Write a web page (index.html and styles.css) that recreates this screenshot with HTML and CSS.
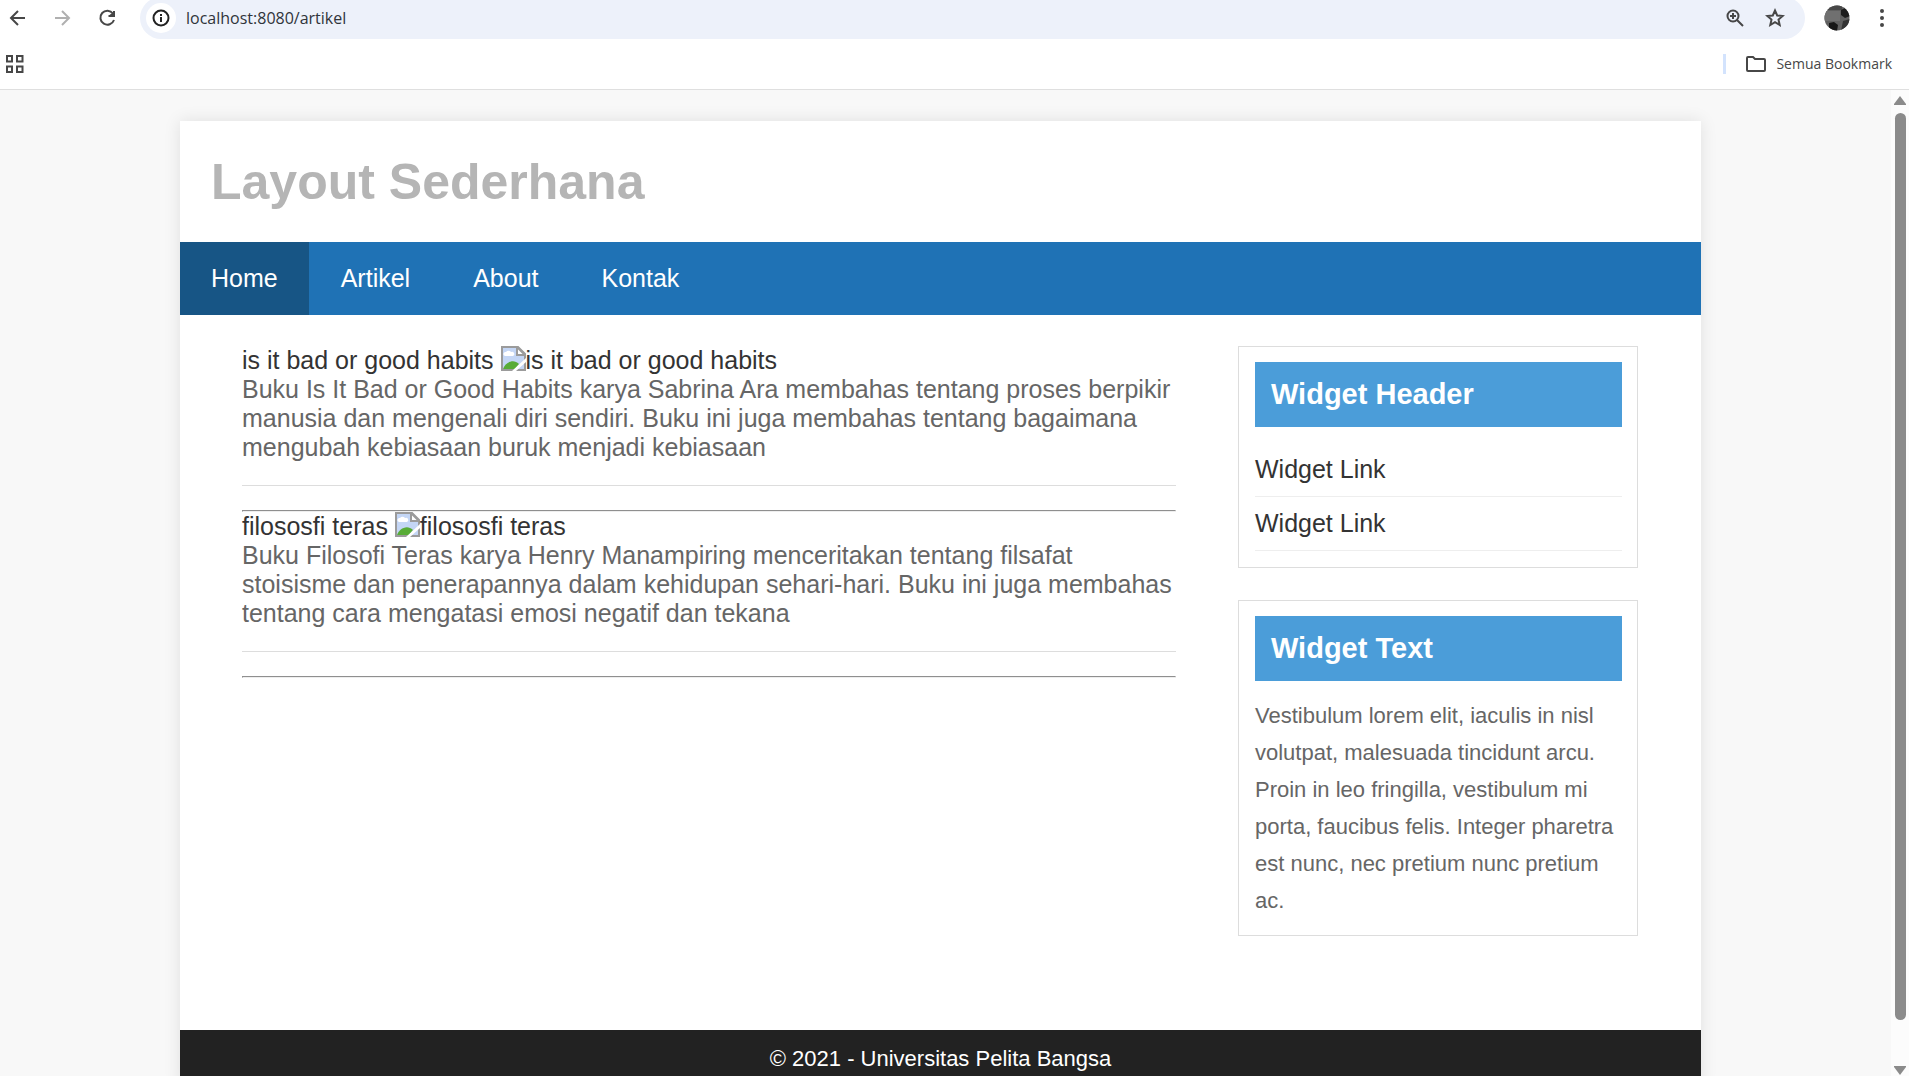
FILE: index.html
```html
<!DOCTYPE html>
<html lang="id">
<head>
<meta charset="utf-8">
<title>Layout Sederhana</title>
<link rel="stylesheet" href="styles.css">
</head>
<body>
<svg class="sprite" aria-hidden="true">
  <symbol id="broken" viewBox="0 0 25 25">
    <path d="M1 1H17L24 8V24H1Z" fill="#c4d6f5" stroke="#9b9b9b" stroke-width="2"/>
    <path d="M4 10a2 2 0 0 1 1-4 3 3 0 0 1 5 0 2 2 0 0 1 2 4Z" fill="#fff"/>
    <path d="M2 23C4 17 12 12 18 18L14 23Z" fill="#58ac37"/>
    <path d="M16 1V9H24Z" fill="#fff" stroke="#9b9b9b" stroke-width="2"/>
    <path d="M25 12V16L15 25H11Z" fill="#fff"/>
  </symbol>
</svg>

<header class="chrome">
  <div class="toolbar">
    <div class="nav-buttons">
      <button class="icon-btn" aria-label="Kembali"><svg width="20" height="20" viewBox="0 0 20 20"><path d="M17 10H3M10 3L3 10L10 17"/></svg></button>
      <button class="icon-btn faded" aria-label="Maju"><svg width="20" height="20" viewBox="0 0 20 20"><path d="M2 10H16M9 3L16 10L9 17"/></svg></button>
      <button class="icon-btn" aria-label="Muat ulang"><svg width="20" height="20" viewBox="0 0 20 20"><path d="M15 5.500A7 7 0 1 0 16 12M16 3V8H10.500M12 8L16 4.500"/></svg></button>
    </div>
    <div class="address">
      <button class="site-info" aria-label="Informasi situs"><svg width="18" height="18" viewBox="0 0 18 18"><circle cx="9" cy="9" r="7.500"/><path d="M9 8V13M9 5V7"/></svg></button>
      <input class="url" type="text" value="localhost:8080/artikel" aria-label="Alamat">
      <button class="icon-btn" aria-label="Zoom"><svg width="20" height="20" viewBox="0 0 20 20"><circle cx="8" cy="8" r="5.500"/><path d="M12 12L18 18M8 5V11M5 8H11"/></svg></button>
      <button class="icon-btn" aria-label="Tambahkan bookmark"><svg width="20" height="20" viewBox="0 0 20 20"><path d="M10 2.500L12.200 7.500L17.600 8L13.500 11.600L14.700 17L10 14.100L5.300 17L6.500 11.600L2.400 8L7.800 7.500Z"/></svg></button>
    </div>
    <button class="avatar" aria-label="Profil"><svg width="26" height="26" viewBox="0 0 26 26"><defs><clipPath id="round"><circle cx="13" cy="13" r="12.500"/></clipPath></defs><g clip-path="url(#round)"><path d="M0 0H26V26H0Z" fill="#606060"/><path d="M0 0H18V5H0Z" fill="#484848"/><path d="M0 6H16V16H0Z" fill="#707070"/><path d="M17 5L21 3L26 5V11L21 13L17 10Z" fill="#1c1c1c"/><path d="M19 16L26 14V26H17Z" fill="#333"/><path d="M5 18L10 17L14 20L13 26H5Z" fill="#171717"/></g></svg></button>
    <button class="menu-btn" aria-label="Menu"><svg width="6" height="20" viewBox="0 0 6 20"><circle cx="3" cy="3" r="2"/><circle cx="3" cy="10" r="2"/><circle cx="3" cy="17" r="2"/></svg></button>
  </div>
  <div class="bookmarks">
    <button class="icon-btn" aria-label="Aplikasi"><svg width="20" height="20" viewBox="0 0 20 20"><path d="M3 2H8V7.500H3ZM13 2H18.500V7.500H13ZM3 12.500H8V18H3ZM13 12.500H18.500V18H13Z"/></svg></button>
    <button class="all-bookmarks"><svg width="22" height="18" viewBox="0 0 22 18"><path d="M2 15V3Q2 2 3 2H8L10 4H19Q20 4 20 5V15Q20 16 19 16H3Q2 16 2 15Z"/></svg>Semua Bookmark</button>
  </div>
</header>

<div class="viewport">
  <div class="page">
    <div class="container">
      <header class="site-header"><h1>Layout Sederhana</h1></header>
      <nav class="site-nav">
        <a class="active" href="#">Home</a>
        <a href="#">Artikel</a>
        <a href="#">About</a>
        <a href="#">Kontak</a>
      </nav>
      <div class="wrapper">
        <main class="main">
          <article class="entry">
            <h2><a href="#">is it bad or good habits</a> <svg class="broken" aria-hidden="true"><use href="#broken"/></svg>is it bad or good habits</h2>
            <p>Buku Is It Bad or Good Habits karya Sabrina Ara membahas tentang proses berpikir manusia dan mengenali diri sendiri. Buku ini juga membahas tentang bagaimana mengubah kebiasaan buruk menjadi kebiasaan</p>
          </article>
          <hr class="divider">
          <article class="entry">
            <h2><a href="#">filososfi teras</a> <svg class="broken" aria-hidden="true"><use href="#broken"/></svg>filososfi teras</h2>
            <p>Buku Filosofi Teras karya Henry Manampiring menceritakan tentang filsafat stoisisme dan penerapannya dalam kehidupan sehari-hari. Buku ini juga membahas tentang cara mengatasi emosi negatif dan tekana</p>
          </article>
          <hr class="divider">
        </main>
        <aside class="sidebar">
          <section class="widget">
            <h3>Widget Header</h3>
            <ul>
              <li><a href="#">Widget Link</a></li>
              <li><a href="#">Widget Link</a></li>
            </ul>
          </section>
          <section class="widget">
            <h3>Widget Text</h3>
            <p>Vestibulum lorem elit, iaculis in nisl volutpat, malesuada tincidunt arcu. Proin in leo fringilla, vestibulum mi porta, faucibus felis. Integer pharetra est nunc, nec pretium nunc pretium ac.</p>
          </section>
        </aside>
      </div>
      <footer class="site-footer"><p>© 2021 - Universitas Pelita Bangsa</p></footer>
    </div>
  </div>
  <div class="scrollbar" aria-hidden="true">
    <svg width="14" height="11" viewBox="0 0 14 11"><path d="M7 1L13 9V10H1V9Z"/></svg>
    <div class="track"><div class="thumb"></div></div>
    <svg width="14" height="11" viewBox="0 0 14 11"><path d="M7 10L1 2V1H13V2Z"/></svg>
  </div>
</div>
</body>
</html>
```
FILE: styles.css
```css
* {
  box-sizing: border-box;
  margin: 0;
  padding: 0;
}

body {
  display: flex;
  flex-direction: column;
  height: 100vh;
  overflow: hidden;
  background: #f8f8f8;
  font-family: "Liberation Sans", Arial, sans-serif;
  font-size: 25px;
  line-height: 29px;
  color: #666;
}

a {
  color: #333;
  text-decoration: none;
}

button {
  border: 0;
  background: none;
  font: inherit;
  color: inherit;
}

.sprite {
  display: none;
}

/* Browser chrome */
.chrome {
  flex: none;
  background: #fff;
  border-bottom: 1px solid #dfdfdf;
  font-family: "Open Sans", "Noto Sans", sans-serif;
  color: #474747;
}

.chrome svg {
  display: block;
  fill: none;
  stroke: #474747;
  stroke-width: 2;
}

.toolbar {
  display: flex;
  align-items: center;
  height: 39px;
  padding-right: 24px;
  overflow: hidden;
}

.nav-buttons {
  display: flex;
  gap: 25px;
  width: 140px;
  padding: 0 0 4px 8px;
}

.chrome .faded svg {
  stroke: #b0b0b0;
}

.address {
  display: flex;
  flex: 1;
  align-items: center;
  gap: 20px;
  height: 42px;
  margin-top: -3px;
  padding: 0 20px 0 6px;
  border-radius: 21px;
  background: #edf1fa;
}

.site-info {
  display: grid;
  place-items: center;
  width: 30px;
  height: 30px;
  border-radius: 50%;
  background: #fff;
}

.chrome .site-info svg {
  stroke: #222;
}

.url {
  flex: 1;
  margin-left: -10px;
  border: 0;
  outline: 0;
  background: none;
  font: 16px/24px "Open Sans", "Noto Sans", sans-serif;
  color: #30343a;
}

.avatar {
  margin: 0 29px 4px 19px;
}

.avatar svg {
  stroke: none;
}

.menu-btn {
  margin-bottom: 4px;
}

.chrome .menu-btn svg {
  fill: #474747;
  stroke: none;
}

.bookmarks {
  display: flex;
  align-items: center;
  justify-content: space-between;
  height: 50px;
  padding: 0 17px 0 4px;
}

.all-bookmarks {
  display: flex;
  align-items: center;
  gap: 9px;
  height: 20px;
  padding-left: 19px;
  border-left: 3px solid #d3e3fd;
  font-size: 14px;
  line-height: 20px;
}

/* Page area */
.viewport {
  display: flex;
  flex: 1;
  min-height: 0;
}

.page {
  flex: 1;
  padding: 31px 190px 0 180px;
  overflow: hidden;
}

.container {
  background: #fff;
  box-shadow: 0 0 16px rgba(0, 0, 0, 0.1);
}

.site-header {
  padding: 32px 31px 30px;
}

.site-header h1 {
  font-size: 50px;
  line-height: 59px;
  color: #b5b5b5;
}

.site-nav {
  display: flex;
  gap: 1px;
  background: #1f72b5;
}

.site-nav a {
  padding: 22px 31px;
  color: #fff;
}

.site-nav .active {
  background: #175585;
}

.wrapper {
  display: flex;
  gap: 62px;
  padding: 31px 63px 62px 62px;
}

.main {
  flex: 1;
}

.entry {
  padding-bottom: 23px;
  border-bottom: 1px solid #ddd;
}

.entry h2 {
  font-size: 25px;
  font-weight: normal;
  color: #333;
}

.broken {
  display: inline-block;
  width: 25px;
  height: 25px;
  vertical-align: top;
}

.divider {
  margin-top: 24px;
  border: 1px solid;
  border-color: #8f8f8f #eee #eee #8f8f8f;
}

.sidebar {
  width: 400px;
}

.widget {
  margin-bottom: 32px;
  padding: 15px 15px 16px 16px;
  border: 1px solid #ddd;
}

.widget h3 {
  margin-bottom: 16px;
  padding: 16px;
  background: #4b9dd9;
  font-size: 29px;
  line-height: 33px;
  color: #fff;
}

.widget ul {
  list-style: none;
}

.widget li {
  padding: 12px 0;
  border-bottom: 1px solid #eee;
}

.widget p {
  font-size: 22px;
  line-height: 37px;
}

.site-footer {
  padding: 16px 31px;
  background: #222;
  font-size: 22px;
  line-height: 25px;
  text-align: center;
  color: #fff;
}

/* Scrollbar */
.scrollbar {
  display: flex;
  flex: none;
  flex-direction: column;
  align-items: center;
  gap: 7px;
  width: 18px;
  padding: 5px 0 0;
  background: #fcfcfc;
  fill: #8b8b8b;
}

.scrollbar svg {
  flex: none;
}

.track {
  flex: 1;
  width: 11px;
}

.thumb {
  height: 96%;
  border-radius: 6px;
  background: #8b8b8b;
}
```
